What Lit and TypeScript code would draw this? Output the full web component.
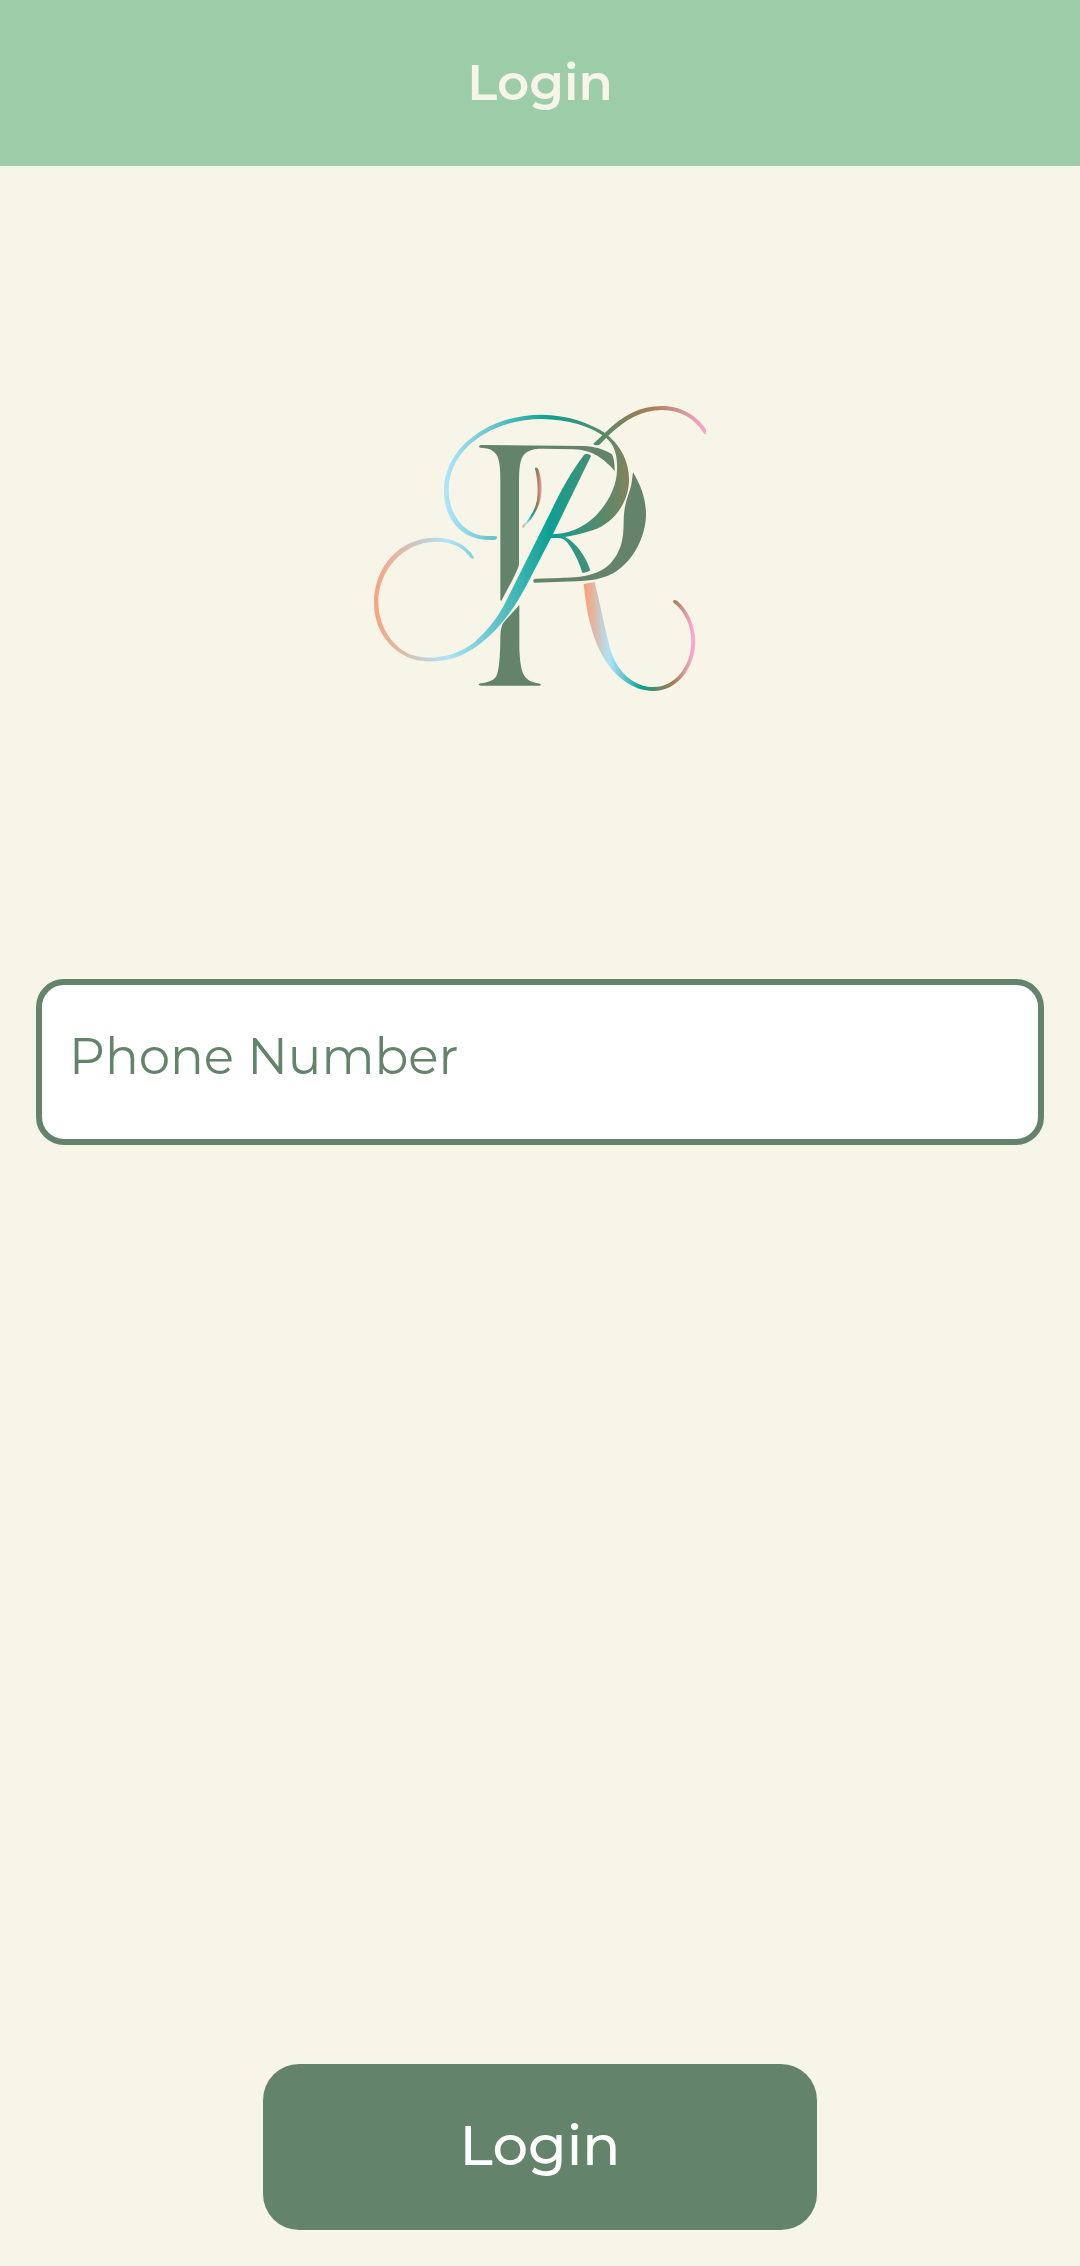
import { LitElement, html, css } from "lit";
import { customElement, state } from "lit/decorators.js";

@customElement("brand-monogram")
export class BrandMonogram extends LitElement {
  static styles = css`
    :host {
      display: block;
      width: 360px;
      max-width: 100%;
    }
    .mark {
      display: block;
      width: 100%;
      height: auto;
    }
  `;

  render() {
    return html`
      <svg class="mark" viewBox="0 0 1080 960" role="img" aria-label="PR monogram">
        <defs>
          <linearGradient id="ribbon" gradientUnits="userSpaceOnUse" x1="42" y1="0" x2="1038" y2="0">
            <stop offset="0" stop-color="#faa27c" />
            <stop offset="0.22" stop-color="#ade4f9" />
            <stop offset="0.53" stop-color="#0ba094" />
            <stop offset="0.7" stop-color="#5d8868" />
            <stop offset="0.83" stop-color="#a87d53" />
            <stop offset="1" stop-color="#f7a8cb" />
          </linearGradient>
          <linearGradient id="leg" gradientUnits="userSpaceOnUse" x1="671" y1="0" x2="1006" y2="0">
            <stop offset="0.02" stop-color="#faa27c" />
            <stop offset="0.23" stop-color="#ade4f9" />
            <stop offset="0.52" stop-color="#0ba094" />
            <stop offset="0.66" stop-color="#5d8868" />
            <stop offset="0.81" stop-color="#a87d53" />
            <stop offset="0.97" stop-color="#f7a8cb" />
          </linearGradient>
          <linearGradient id="accent" gradientUnits="userSpaceOnUse" x1="486" y1="0" x2="546" y2="0">
            <stop offset="0" stop-color="#faa27c" />
            <stop offset="0.22" stop-color="#ade4f9" />
            <stop offset="0.5" stop-color="#0ba094" />
            <stop offset="0.68" stop-color="#5d8868" />
            <stop offset="0.8" stop-color="#a87d53" />
            <stop offset="1" stop-color="#f7a8cb" />
          </linearGradient>
        </defs>
        <g fill="#64836b">
          <path d="M357 170C357 166 362 165 370 165L670 168C705 169 730 178 755 192C761 200 764 220 764 243C735 210 700 179 640 178L550 176C530 176 515 177 500 187C482 200 478 220 477 270L477 525C465 560 440 600 424 633L421 630L421 270C421 240 420 208 408 192C395 176 380 174 361 173Z" />
          <path d="M478 645L478 770C479 810 483 845 495 860C507 874 520 877 540 881C545 884 542 887 535 887L365 887C354 886 354 882 362 880C385 877 400 871 408 860C418 845 421 790 421 740C422 715 425 704 435 692Z" />
          <path d="M819 247C845 290 858 330 858 375C857 440 820 510 770 543C735 567 690 572 650 574L522 578C518 573 520 567 526 566L600 564C660 563 715 558 752 520C783 485 790 450 791 400C791 350 800 330 808 305C816 285 816 265 819 247Z" />
        </g>
        <g fill="url(#ribbon)">
          <path d="M672 195C676 191 688 191 693 198L578 434L500 585C480 622 462 652 440 680C395 740 330 793 270 807C235 816 190 817 160 808C90 785 42 720 42 637C42 530 120 443 225 443C280 443 320 465 341 500L340 507L333 505C310 473 280 455 225 455C130 458 55 540 55 635C55 720 110 785 170 799C230 812 300 792 345 755C390 715 420 672 440 630L510 490L570 370C600 307 630 250 672 195Z" />
          <path d="M411 440C412 446 408 450 400 450C340 452 300 430 275 390C257 360 252 330 252 300C254 170 390 74 545 74C625 75 690 100 732 127C785 165 808 220 807 270C806 340 760 400 700 420C670 430 640 437 615 441L575 434L580 432C620 432 650 420 680 400C730 365 770 300 771 240C773 200 765 165 738 143C690 108 625 88 545 87C390 88 266 180 266 300C266 380 320 437 380 438C395 438 405 437 411 440Z" />
          <path d="M565 445L578 432L600 434L615 441C650 458 680 505 691 541C684 547 672 549 667 548C655 510 640 480 620 455C612 446 600 443 590 444Z" />
          <path d="M700 161L735 128C790 75 840 48 905 48C960 47 1010 75 1038 118L1038 131L1033 132C1005 85 960 60 905 60C845 60 800 87 750 132L720 163C715 168 702 166 700 161Z" />
        </g>
        <path fill="url(#leg)" d="M671 582L704 576C720 640 735 720 753 785C775 850 825 891 880 891C945 891 993 830 994 755C994 705 975 665 941 638C936 631 944 627 951 632C985 660 1005 705 1006 755C1004 835 950 903 880 903C810 902 760 850 735 810C695 745 680 670 671 582Z" />
        <path fill="url(#accent)" d="M525 236C526 230 533 231 536 240C548 275 548 310 538 340C528 370 508 395 492 413C487 415 485 409 488 406C510 385 525 360 531 330C535 300 533 265 525 236Z" />
      </svg>
    `;
  }
}

@customElement("app-root")
export class AppRoot extends LitElement {
  static styles = css`
    :host {
      display: block;
      font-family: Montserrat, Inter, "Open Sans", sans-serif;
    }
    .screen {
      box-sizing: border-box;
      display: flex;
      flex-direction: column;
      min-height: 100vh;
      background: #f7f5e8;
    }
    .bar {
      display: flex;
      align-items: center;
      justify-content: center;
      height: 166px;
      background: #9ccda8;
    }
    .title {
      margin: 0;
      color: #f7f5e8;
      font-size: 50px;
      line-height: 64px;
      font-weight: 600;
    }
    .form {
      flex: 1;
      display: flex;
      flex-direction: column;
      align-items: center;
      padding: 224px 36px 36px;
    }
    .field {
      box-sizing: border-box;
      width: 100%;
      height: 166px;
      margin-top: 269px;
      padding: 0 27px 12px;
      border: 6px solid #64836b;
      border-radius: 28px;
      outline: none;
      background: #ffffff;
      color: #64836b;
      font: inherit;
      font-size: 50px;
      font-weight: 400;
    }
    .field::placeholder {
      color: #64836b;
      opacity: 1;
    }
    .submit {
      width: 55%;
      height: 166px;
      margin-top: auto;
      padding: 0 0 4px;
      border: 0;
      border-radius: 36px;
      background: #64836b;
      color: #ffffff;
      font: inherit;
      font-size: 56px;
      font-weight: 500;
      cursor: pointer;
    }
  `;

  @state() private phone = "";

  private onInput(event: Event) {
    this.phone = (event.target as HTMLInputElement).value;
  }

  private onSubmit(event: Event) {
    event.preventDefault();
  }

  render() {
    return html`
      <main class="screen">
        <header class="bar"><h1 class="title">Login</h1></header>
        <form class="form" @submit=${this.onSubmit}>
          <brand-monogram></brand-monogram>
          <input
            class="field"
            type="tel"
            name="phone"
            aria-label="Phone Number"
            placeholder="Phone Number"
            .value=${this.phone}
            @input=${this.onInput}
          />
          <button class="submit" type="submit">Login</button>
        </form>
      </main>
    `;
  }
}
